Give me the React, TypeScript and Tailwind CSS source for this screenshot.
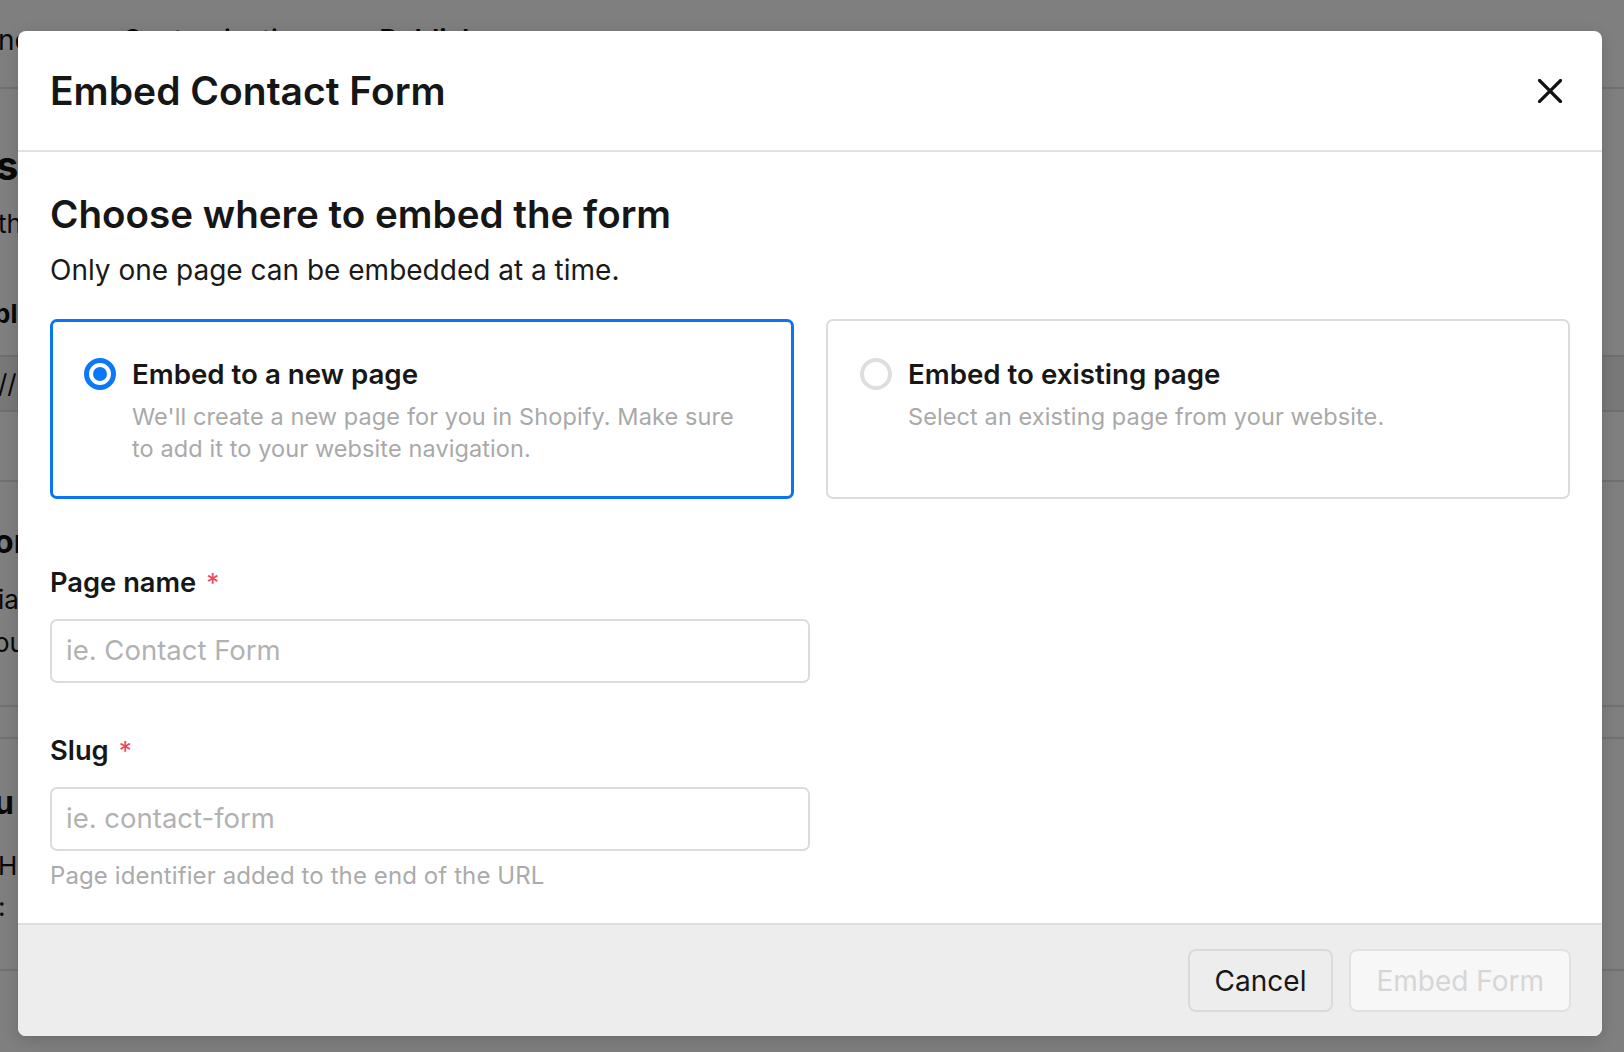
import React from "react";

function BgPage() {
  return (
    <div className="flex flex-col text-[#111]" style={{ fontFamily: "Inter, 'Noto Sans', sans-serif" }}>
      <div className="flex h-[89px] items-start border-b-2 border-[#e2e2e2] pt-[22px] text-[28px] leading-[36px]">
        <span className="w-[124px] shrink-0 -ml-[2px]">nc</span>
        <span className="shrink-0">Customization</span>
        <span className="ml-[68px] shrink-0 font-semibold">Publish</span>
      </div>
      <div className="mt-[53px] -ml-[4px] text-[40px] font-bold leading-[48px]">sl</div>
      <div className="mt-[17px] -ml-[2px] text-[26px] leading-[34px]">th</div>
      <div className="mt-[56px] -ml-[6px] text-[26px] font-bold leading-[34px]">ble</div>
      <div className="mt-[24px] flex h-[57px] items-center border-y-2 border-[#dedede] bg-[#f0f0f0] text-[26px]">
        <span className="-ml-[2px]">//c</span>
      </div>
      <div className="mt-[68px] border-t-2 border-[#e2e2e2]" />
      <div className="mt-[40px] -ml-[6px] text-[32px] font-bold leading-[40px]">or</div>
      <div className="mt-[18px] -ml-[2px] text-[26px] leading-[40px]">ia</div>
      <div className="mt-[3px] -ml-[6px] text-[26px] leading-[40px]">ou</div>
      <div className="mt-[42px] border-t-2 border-[#e2e2e2]" />
      <div className="mt-[30px] border-t-2 border-[#e2e2e2]" />
      <div className="mt-[44px] -ml-[6px] text-[32px] font-bold leading-[40px]">u</div>
      <div className="mt-[23px] -ml-[2px] text-[26px] leading-[40px]">H</div>
      <div className="mt-[1px] -ml-[2px] text-[26px] leading-[40px]">:</div>
      <div className="mt-[42px] border-t-2 border-[#e2e2e2]" />
    </div>
  );
}

function Radio({ checked }: { checked: boolean }) {
  if (checked) {
    return (
      <span className="flex h-[32px] w-[32px] shrink-0 items-center justify-center rounded-full border-[5px] border-[#0a78f8] bg-white">
        <span className="h-[14px] w-[14px] rounded-full bg-[#0a78f8]" />
      </span>
    );
  }
  return <span className="h-[32px] w-[32px] shrink-0 rounded-full border-[4px] border-[#dedede] bg-white" />;
}

function OptionCard({
  checked,
  title,
  desc,
}: {
  checked: boolean;
  title: string;
  desc: string;
}) {
  return (
    <div
      className={
        checked
          ? "flex h-[180px] gap-[16px] rounded-[7px] border-[3px] border-[#0a74f2] pb-[28px] pl-[31px] pr-[30px] pt-[32px]"
          : "flex h-[180px] gap-[16px] rounded-[7px] border-2 border-[#dcdcdc] pb-[29px] pl-[32px] pr-[31px] pt-[33px]"
      }
    >
      <div className="flex h-[40px] items-center">
        <Radio checked={checked} />
      </div>
      <div className="flex flex-col">
        <div className="text-[27.7px] font-semibold leading-[40px] text-[#171717]">{title}</div>
        <div className="mt-[7px] text-[23.5px] leading-[32px] tracking-[0.1px] text-[#a9a9a9]">{desc}</div>
      </div>
    </div>
  );
}

function Field({ label, placeholder }: { label: string; placeholder: string }) {
  return (
    <div className="flex flex-col">
      <div className="flex h-[40px] items-center text-[27.3px] font-semibold leading-[40px] text-[#171717]">
        {label}
        <span className="ml-[10px] mt-[0px] text-[26px] font-normal text-[#ef4664]">*</span>
      </div>
      <div className="mt-[16px] flex h-[64px] w-1/2 items-center rounded-[7px] border-2 border-[#dcdcdc] bg-white px-[14px]">
        <input
          className="w-full bg-transparent text-[27.5px] text-[#222] outline-none placeholder:text-[#b2b2b2]"
          placeholder={placeholder}
          style={{ fontFamily: "Inter, 'Noto Sans', sans-serif" }}
        />
      </div>
    </div>
  );
}

export default function App() {
  return (
    <div
      className="relative h-[1052px] w-full overflow-hidden bg-white"
      style={{ fontFamily: "Inter, 'Noto Sans', sans-serif" }}
    >
      <BgPage />
      <div className="absolute inset-0 bg-black/50" />
      <div className="absolute inset-0 flex items-start justify-start pl-[18px] pt-[31px]">
        <div className="flex h-[1005px] w-[1584px] flex-col overflow-hidden rounded-[8px] bg-white shadow-[0_4px_16px_rgba(0,0,0,0.15)]">
          <div className="flex h-[121px] shrink-0 items-center justify-between border-b-2 border-[#e2e2e2] pl-[32px] pr-[38px]">
            <h1 className="text-[39px] font-semibold leading-[48px] text-[#161616]">Embed Contact Form</h1>
            <button className="flex h-[28px] w-[28px] items-center justify-center text-[#111]">
              <svg width="24" height="24" viewBox="0 0 24 24" fill="none">
                <path d="M1.5 1.5 L22.5 22.5 M22.5 1.5 L1.5 22.5" stroke="currentColor" strokeWidth="3.2" strokeLinecap="square" />
              </svg>
            </button>
          </div>
          <div className="flex flex-1 flex-col px-[32px] pt-[38px]">
            <h2 className="text-[38.6px] font-semibold leading-[48px] text-[#161616]">
              Choose where to embed the form
            </h2>
            <p className="mt-[14px] text-[28px] leading-[36px] text-[#1a1a1a]">
              Only one page can be embedded at a time.
            </p>
            <div className="mt-[31px] grid grid-cols-2 gap-[32px]">
              <OptionCard
                checked
                title="Embed to a new page"
                desc="We'll create a new page for you in Shopify. Make sure to add it to your website navigation."
              />
              <OptionCard
                checked={false}
                title="Embed to existing page"
                desc="Select an existing page from your website."
              />
            </div>
            <div className="mt-[64px]">
              <Field label="Page name" placeholder="ie. Contact Form" />
            </div>
            <div className="mt-[48px]">
              <Field label="Slug" placeholder="ie. contact-form" />
            </div>
            <p className="mt-[9px] text-[24px] leading-[32px] tracking-[0.1px] text-[#ababab]">
              Page identifier added to the end of the URL
            </p>
          </div>
          <div className="flex h-[113px] shrink-0 items-center justify-end gap-[16px] border-t-2 border-[#dedede] bg-[#ededed] pl-[32px] pr-[31px]">
            <button className="flex h-[63px] items-center rounded-[8px] border-2 border-[#dadada] bg-[#ededed] px-[25px] text-[28px] text-[#171717]">
              Cancel
            </button>
            <button className="flex h-[63px] items-center rounded-[8px] border-2 border-[#e2e2e2] bg-[#f7f7f7] px-[25px] text-[28px] text-[#d6d6d6]">
              Embed Form
            </button>
          </div>
        </div>
      </div>
    </div>
  );
}
